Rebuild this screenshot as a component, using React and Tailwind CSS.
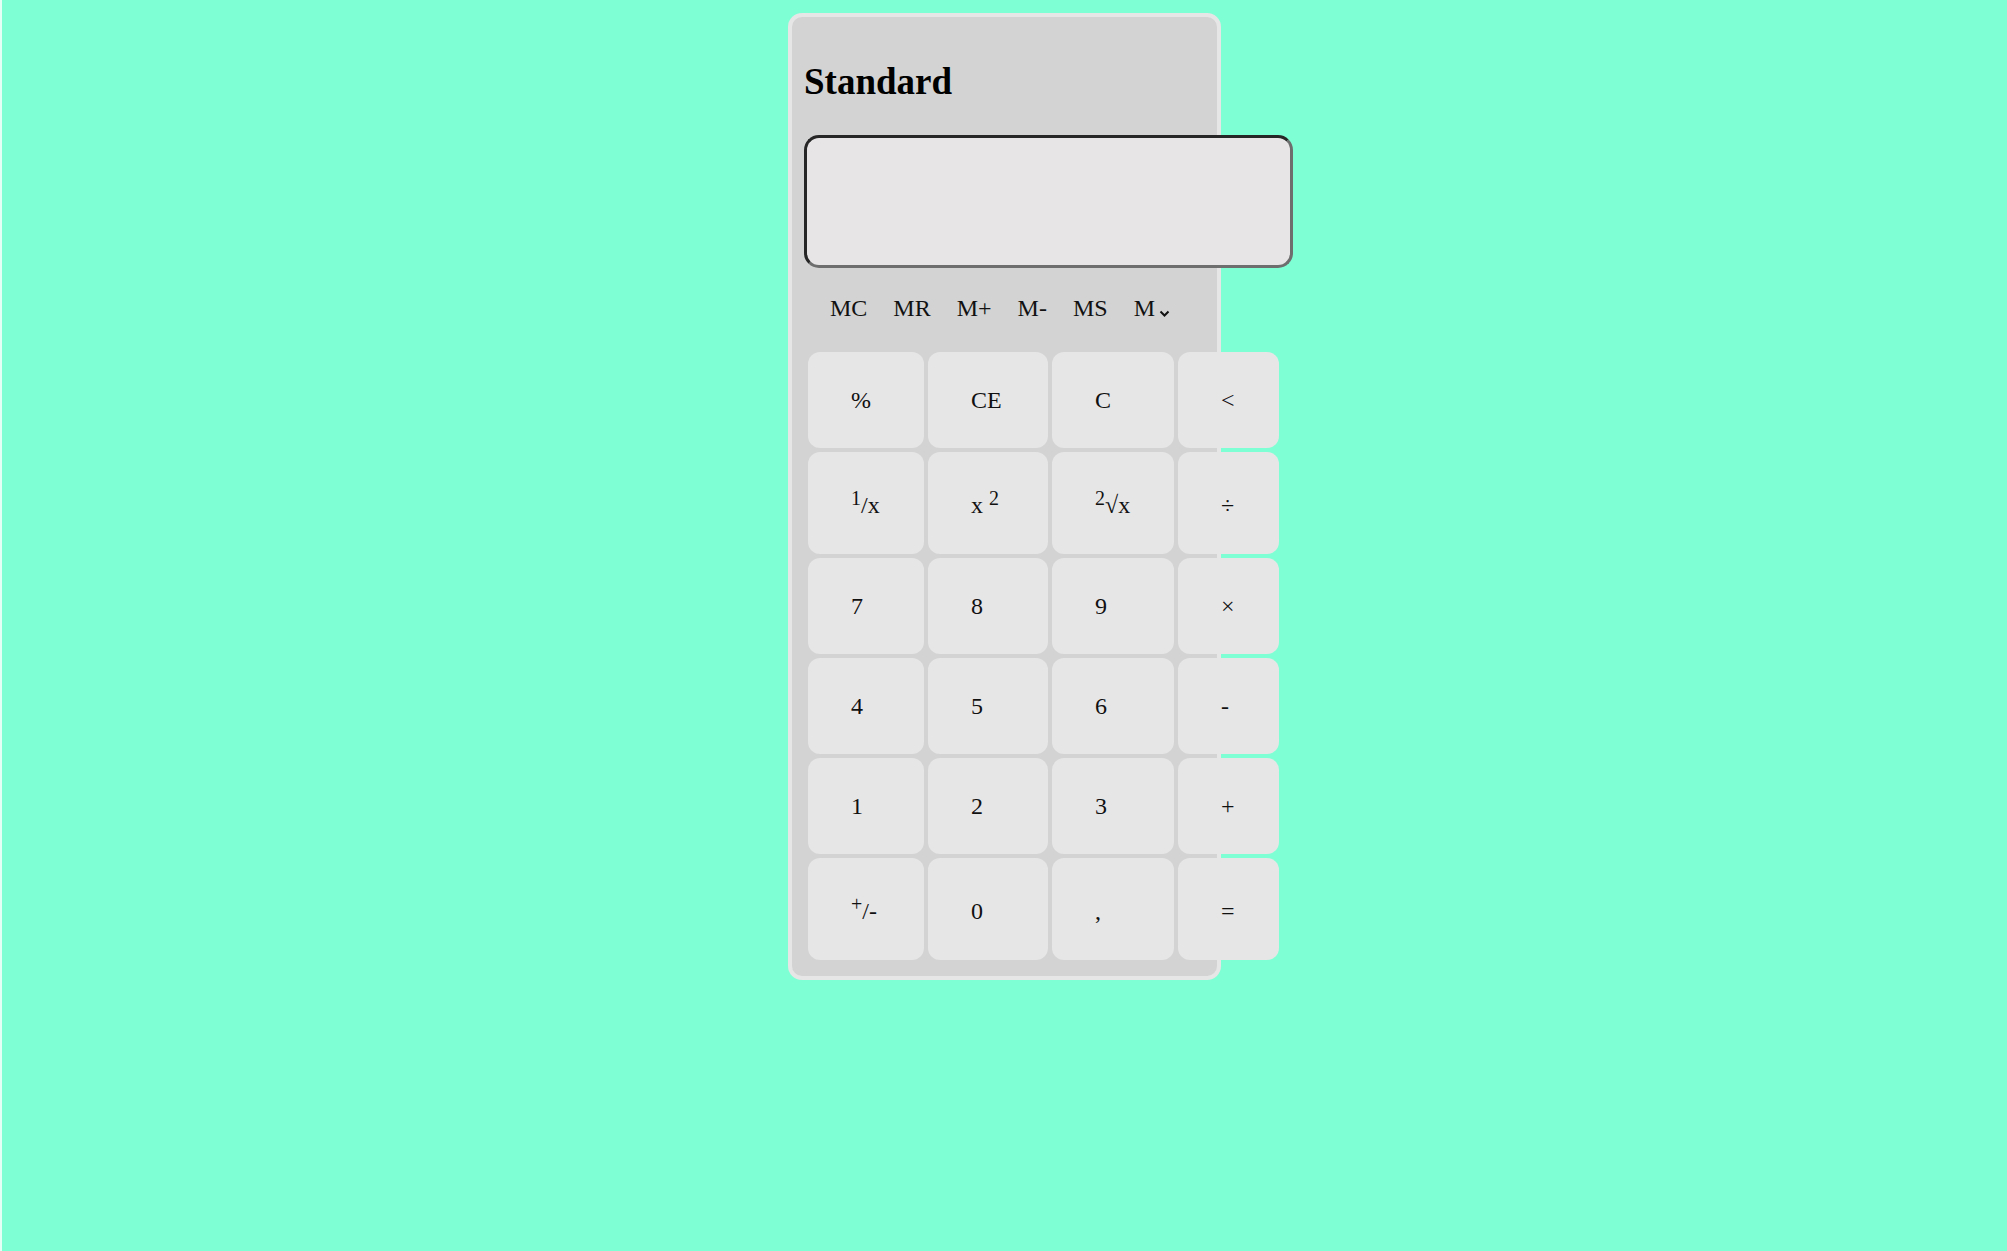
import React from "react";

const rows = [
  { h: "h-[96px]", keys: ["%", "CE", "C", "<"] },
  { h: "h-[102px]", keys: ["inv", "sq", "sqrt", "÷"] },
  { h: "h-[96px]", keys: ["7", "8", "9", "×"] },
  { h: "h-[96px]", keys: ["4", "5", "6", "-"] },
  { h: "h-[96px]", keys: ["1", "2", "3", "+"] },
  { h: "h-[102px]", keys: ["neg", "0", ",", "="] },
];

const Sup = ({ children }) => (
  <sup className="text-[20px] top-[-8px]">{children}</sup>
);

const label = (k) => {
  if (k === "inv")
    return (
      <>
        <Sup>1</Sup>/x
      </>
    );
  if (k === "sq")
    return (
      <>
        x <Sup>2</Sup>
      </>
    );
  if (k === "sqrt")
    return (
      <>
        <Sup>2</Sup>√x
      </>
    );
  if (k === "neg")
    return (
      <>
        <Sup>+</Sup>/-
      </>
    );
  return k;
};

const App = () => {
  return (
    <div
      className="min-h-screen w-full bg-[#7fffd4] border-l-2 border-[#e4fff6] pt-[13px]"
      style={{ fontFamily: '"Liberation Serif", "Times New Roman", serif' }}
    >
      <div className="mx-auto w-[433px] bg-[#d3d3d3] border-4 border-[#e6e6e6] rounded-[14px] px-[12px] pt-[12px] pb-[12px] text-black">
        <h1 className="mt-[32px] text-[37px] leading-[41px] font-bold">Standard</h1>

        <div className="mt-[33px] w-[489px] h-[133px] bg-[#e7e5e6] rounded-[15px] border-[3px] border-t-[#262626] border-l-[#262626] border-b-[#6e6e6e] border-r-[#6e6e6e]"></div>

        <div className="mt-[26px] flex gap-[26px] pl-[26px] text-[24px] leading-[28px] text-[#111]">
          <span>MC</span>
          <span>MR</span>
          <span>M+</span>
          <span>M-</span>
          <span>MS</span>
          <span className="flex items-end">
            M
            <svg width="11" height="8" viewBox="0 0 11 8" className="mb-[4px] ml-[4px]">
              <path d="M1.5 1.5 L5.5 5.5 L9.5 1.5" fill="none" stroke="#111" strokeWidth="2" />
            </svg>
          </span>
        </div>

        <div className="mt-[26px] p-[4px] flex flex-col gap-[4px] w-[479px]">
          {rows.map((r, i) => (
            <div key={i} className={`grid grid-cols-[116px_120px_122px_101px] gap-[4px] ${r.h}`}>
              {r.keys.map((k) => (
                <button
                  key={k}
                  className="bg-[#e7e6e7] rounded-[12px] flex items-center pl-[43px] text-[24px] text-[#111] text-left"
                >
                  <span className={r.h === "h-[102px]" ? "pt-[4px]" : ""}>{label(k)}</span>
                </button>
              ))}
            </div>
          ))}
        </div>
      </div>
    </div>
  );
};

export default App;
